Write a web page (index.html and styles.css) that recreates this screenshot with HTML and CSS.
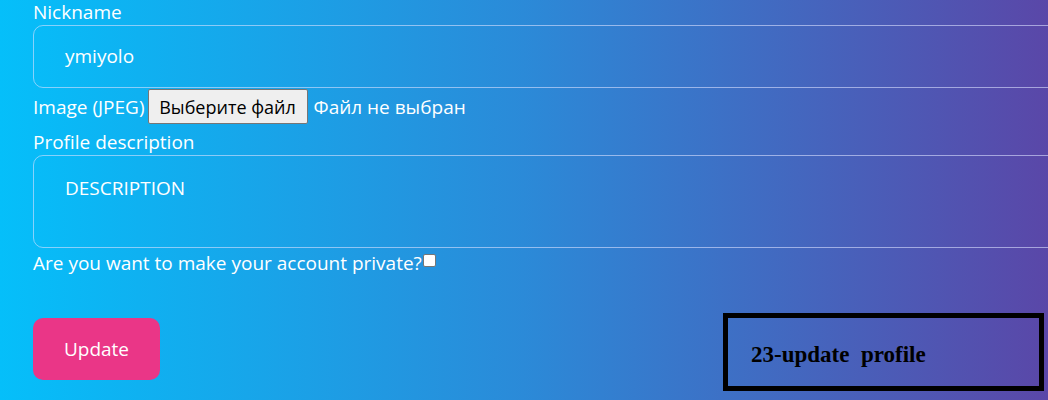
FILE: index.html
```html
<!DOCTYPE html>
<html>
<head>
<meta charset="utf-8">
<link rel="stylesheet" href="styles.css">
</head>
<body>
<form class="form">
  <label class="label">Nickname</label>
  <div class="field field-input">ymiyolo</div>
  <div class="file-row">
    <span>Image (JPEG)</span><span class="file-btn">Выберите файл</span><span class="file-name">Файл не выбран</span>
  </div>
  <label class="label">Profile description</label>
  <div class="field field-area">DESCRIPTION</div>
  <div class="check-row">
    <span>Are you want to make your account private?</span><span class="checkbox"></span>
  </div>
  <button type="button" class="update">Update</button>
</form>
<div class="tag">23-update&nbsp; profile</div>
</body>
</html>
```

FILE: styles.css
```css
html, body {
  margin: 0;
  height: 400px;
  overflow: hidden;
}
body {
  background: linear-gradient(to right, #05bffa 0%, #2b8ad8 50%, #5a47a8 100%);
  font-family: "Segoe UI", "Open Sans", sans-serif;
  font-size: 19px;
  color: #fff;
  position: relative;
}
.form {
  display: flex;
  flex-direction: column;
  align-items: flex-start;
  padding-left: 33px;
}
.label {
  line-height: 24px;
  height: 25px;
}
.field {
  box-sizing: border-box;
  width: 1100px;
  border: 1px solid rgba(220, 225, 255, 0.6);
  border-radius: 10px;
  padding-left: 31px;
}
.field-input {
  height: 63px;
  line-height: 61px;
}
.file-row {
  display: flex;
  align-items: center;
  height: 37px;
  margin-bottom: 5px;
}
.file-btn {
  box-sizing: border-box;
  height: 35px;
  width: 160px;
  margin-left: 3px;
  background: #efefef;
  border: 1px solid #767676;
  border-radius: 2px;
  color: #000;
  font-size: 18px;
  display: flex;
  align-items: center;
  justify-content: center;
}
.file-name {
  margin-left: 6px;
}
.field-area {
  height: 93px;
  padding-top: 19px;
  line-height: 26px;
}
.check-row {
  display: flex;
  align-items: center;
  height: 30px;
}
.checkbox {
  box-sizing: border-box;
  width: 13px;
  height: 13px;
  margin-left: 1px;
  margin-top: -6px;
  background: #fff;
  border: 1px solid #767676;
  border-radius: 2px;
}
.update {
  margin-top: 40px;
  width: 127px;
  height: 62px;
  border: none;
  border-radius: 10px;
  background: #ea3687;
  color: #fff;
  font-family: inherit;
  font-size: 19px;
}
.tag {
  position: absolute;
  left: 723px;
  top: 313px;
  box-sizing: border-box;
  width: 321px;
  height: 78px;
  border: 5px solid #000;
  padding: 24px 0 0 23px;
  font-family: "Liberation Serif", serif;
  font-weight: bold;
  font-size: 23px;
  color: #000;
}
```
